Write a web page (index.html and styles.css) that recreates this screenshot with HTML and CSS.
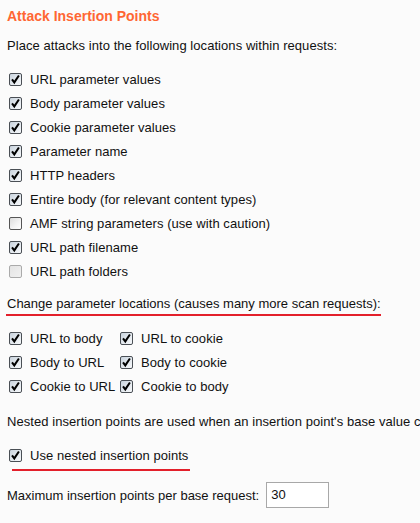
FILE: index.html
```html
<!DOCTYPE html>
<html>
<head>
<meta charset="utf-8">
<link rel="stylesheet" href="styles.css">
</head>
<body>
<div class="panel">
  <h1 class="title">Attack Insertion Points</h1>
  <p class="text intro">Place attacks into the following locations within requests:</p>
  <div class="list">
    <label class="row"><span class="cb on"></span>URL parameter values</label>
    <label class="row"><span class="cb on"></span>Body parameter values</label>
    <label class="row"><span class="cb on"></span>Cookie parameter values</label>
    <label class="row"><span class="cb on"></span>Parameter name</label>
    <label class="row"><span class="cb on"></span>HTTP headers</label>
    <label class="row"><span class="cb on"></span>Entire body (for relevant content types)</label>
    <label class="row"><span class="cb"></span>AMF string parameters (use with caution)</label>
    <label class="row"><span class="cb on"></span>URL path filename</label>
    <label class="row"><span class="cb dis"></span>URL path folders</label>
  </div>
  <p class="text change"><span class="mark">Change parameter locations (causes many more scan requests):</span></p>
  <div class="grid">
    <label class="row"><span class="cb on"></span>URL to body</label>
    <label class="row"><span class="cb on"></span>URL to cookie</label>
    <label class="row"><span class="cb on"></span>Body to URL</label>
    <label class="row"><span class="cb on"></span>Body to cookie</label>
    <label class="row"><span class="cb on"></span>Cookie to URL</label>
    <label class="row"><span class="cb on"></span>Cookie to body</label>
  </div>
  <div class="clip">
    <p class="text nested">Nested insertion points are used when an insertion point's base value co</p>
  </div>
  <label class="row nested-row"><span class="cb on"></span>Use nested insertion points</label>
  <div class="redline"></div>
  <div class="max">
    <span>Maximum insertion points per base request:</span>
    <span class="field">30</span>
  </div>
</div>
</body>
</html>
```
FILE: styles.css
```css
html, body {
  margin: 0;
  padding: 0;
  background: #fbfbfb;
}
body {
  font-family: "Liberation Sans", Arial, sans-serif;
  font-size: 13px;
  color: #111;
  width: 420px;
  height: 523px;
  overflow: hidden;
}
.panel {
  padding: 6px 0 0 7px;
  letter-spacing: 0.06px;
}
.title {
  margin: 0;
  font-size: 14px;
  line-height: 20px;
  font-weight: bold;
  color: #ff6633;
  letter-spacing: 0;
}
.text {
  margin: 0;
  line-height: 20px;
  white-space: nowrap;
}
.intro {
  margin-top: 10px;
}
.list {
  margin-top: 11px;
  display: flex;
  flex-direction: column;
}
.row {
  display: flex;
  align-items: center;
  height: 24px;
  white-space: nowrap;
}
.cb {
  flex: none;
  box-sizing: border-box;
  width: 13px;
  height: 13px;
  margin: 0 8px 0 2px;
  border: 1px solid #555;
  border-radius: 2px;
  background: linear-gradient(135deg, #dcdcdc 0%, #f4f4f4 60%, #ffffff 100%);
}
.cb.on {
  background:
    url("data:image/svg+xml;utf8,<svg xmlns='http://www.w3.org/2000/svg' width='11' height='11' viewBox='0 0 11 11'><path d='M2 5.3 L4.3 8.4 L8.9 1.5' fill='none' stroke='%23000' stroke-width='2'/></svg>") center/11px 11px no-repeat,
    linear-gradient(135deg, #c9d3dd 0%, #e6ebf0 60%, #f6f8fa 100%);
  border-color: #4a4f55;
}
.cb.dis {
  border-color: #aaa;
  background: linear-gradient(135deg, #e4e4e4 0%, #f0f0f0 100%);
}
.change {
  margin-top: 11px;
}
.mark {
  display: inline-block;
  line-height: 20px;
  margin-left: -1px;
  padding-left: 1px;
  letter-spacing: 0;
  border-bottom: 2px solid #e3202b;
}
.grid {
  margin-top: 10px;
  display: grid;
  grid-template-columns: 111px auto;
  width: max-content;
}
.clip {
  overflow: hidden;
  width: 413px;
}
.nested {
  margin-top: 14px;
}
.nested-row {
  margin-top: 11px;
}
.redline {
  margin: 2px 0 0 5px;
  width: 178px;
  height: 2px;
  background: #e3202b;
}
.max {
  margin-top: 11px;
  display: flex;
  align-items: center;
  height: 26px;
  gap: 7px;
  letter-spacing: 0;
}
.field {
  box-sizing: border-box;
  width: 63px;
  height: 26px;
  border: 1px solid #a8a8a8;
  background: #fff;
  padding: 0 4px;
  line-height: 24px;
}
```
